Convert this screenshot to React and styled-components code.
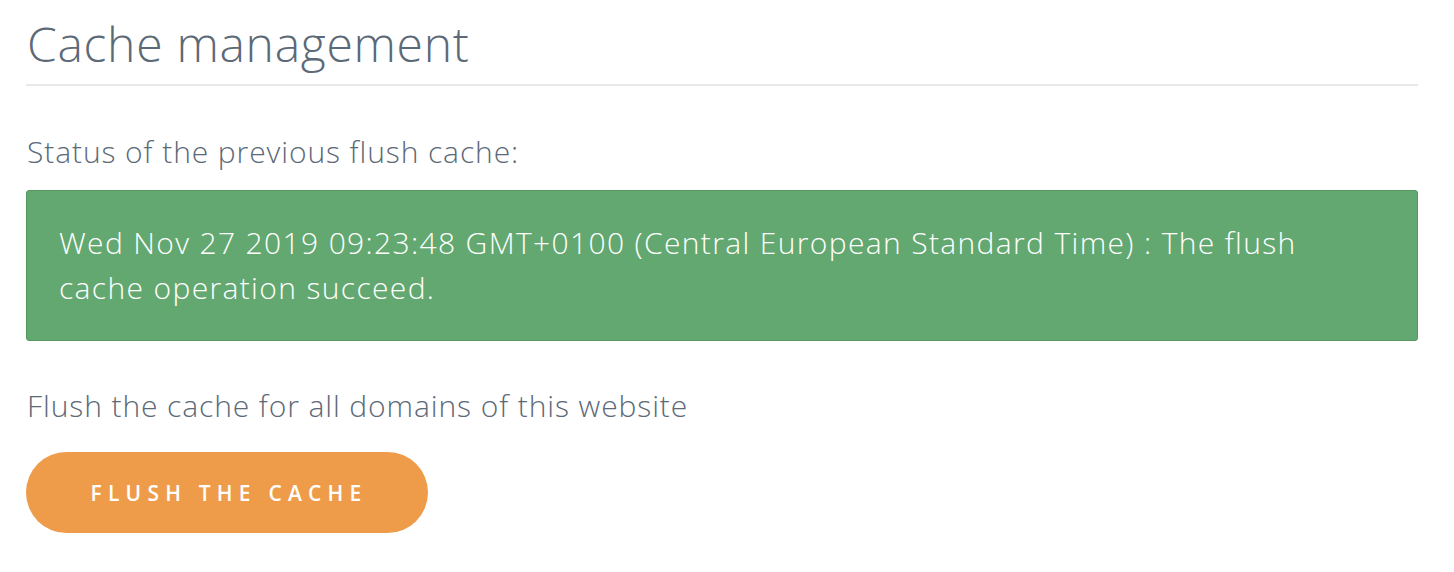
import React from "react";
import styled, { createGlobalStyle } from "styled-components";

const GlobalStyle = createGlobalStyle`
  body {
    margin: 0;
    background: #ffffff;
    font-family: "Open Sans", "Noto Sans", sans-serif;
  }
`;

function App() {
  return (
    <Page>
      <GlobalStyle />
      <Title>Cache management</Title>
      <Section $gap={48}>
        <Label>Status of the previous flush cache:</Label>
        <Alert>
          Wed Nov 27 2019 09:23:48 GMT+0100 (Central European Standard Time) :
          The flush cache operation succeed.
        </Alert>
      </Section>
      <Section $gap={47}>
        <Label $space={28}>Flush the cache for all domains of this website</Label>
        <FlushButton>Flush the cache</FlushButton>
      </Section>
    </Page>
  );
}

export default App;

const Page = styled.div`
  padding: 16px 36px 0 26px;
  display: flex;
  flex-direction: column;
`;

const Title = styled.h1`
  margin: 0;
  padding: 0 0 12px 1px;
  font-size: 48px;
  font-weight: 300;
  letter-spacing: 0.7px;
  color: #5c6977;
  line-height: 56px;
  border-bottom: 2px solid #e6e8ea;
`;

const Section = styled.div`
  display: flex;
  flex-direction: column;
  align-items: flex-start;
  margin-top: ${(p) => p.$gap}px;
`;

const Label = styled.p`
  margin: 0 0 ${(p) => p.$space || 20}px 1px;
  font-size: 30px;
  font-weight: 300;
  letter-spacing: 0.9px;
  color: #5c6977;
  line-height: 36px;
`;

const Alert = styled.div`
  box-sizing: border-box;
  width: 100%;
  padding: 29px 90px 30px 32px;
  background: #63a870;
  border: 1px solid #57985f;
  border-radius: 3px;
  color: #ffffff;
  font-size: 30px;
  line-height: 45px;
  font-weight: 300;
  letter-spacing: 1.35px;
`;

const FlushButton = styled.button`
  width: 402px;
  height: 81px;
  padding: 0 0 0 4px;
  border: none;
  border-radius: 41px;
  background: #ee9c4a;
  color: #ffffff;
  font-family: "Open Sans", "Noto Sans", sans-serif;
  font-size: 21px;
  font-weight: 600;
  letter-spacing: 6.2px;
  text-transform: uppercase;
  cursor: pointer;
`;
